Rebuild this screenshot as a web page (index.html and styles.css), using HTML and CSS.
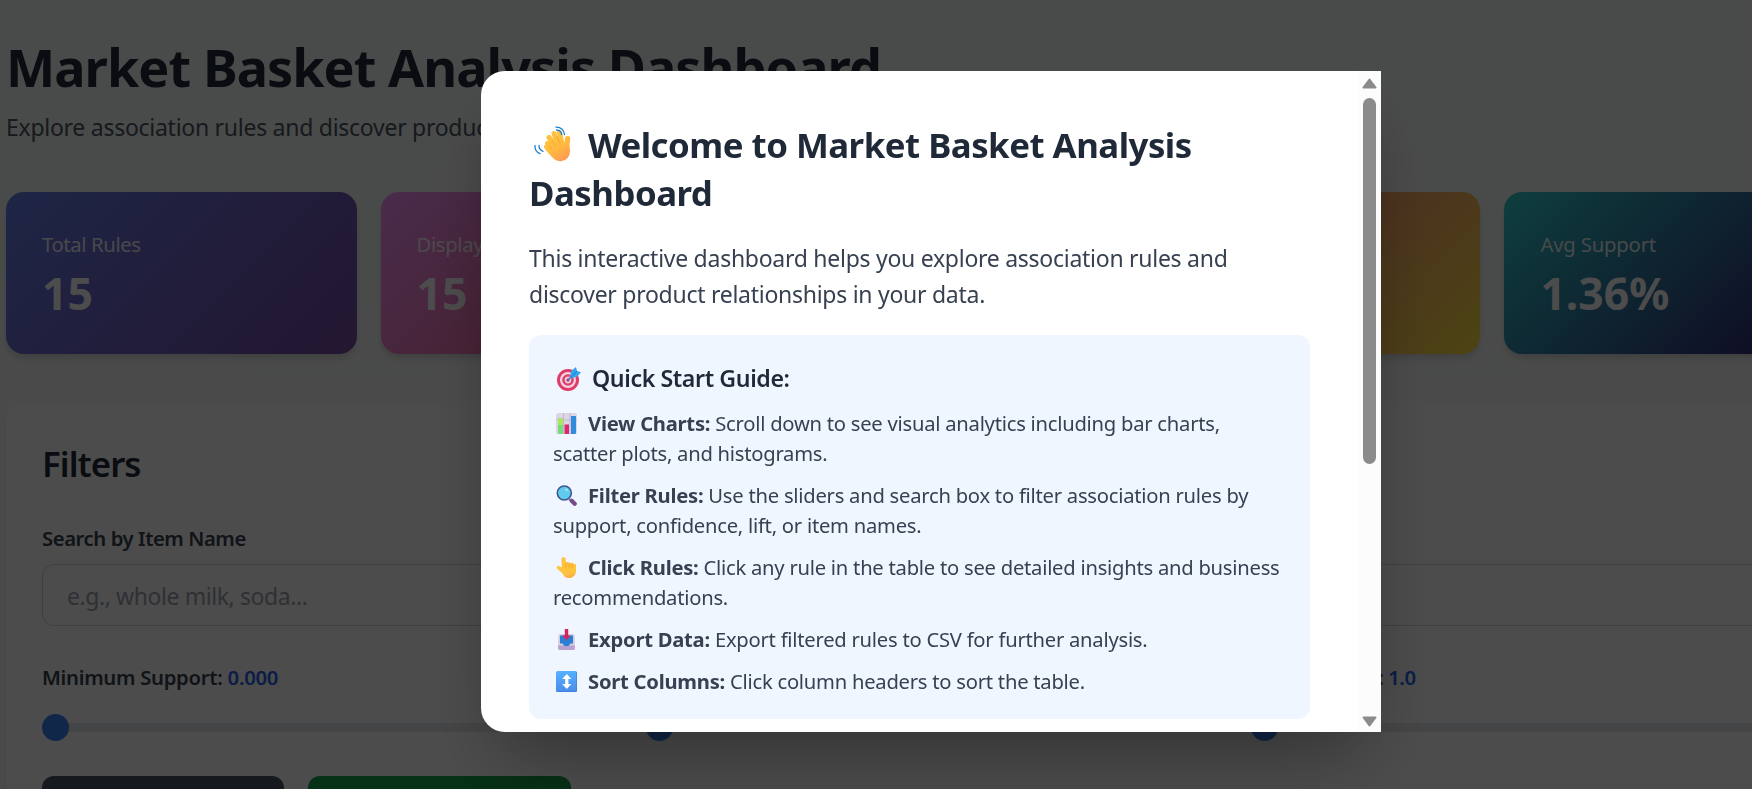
FILE: index.html
```html
<!DOCTYPE html>
<html lang="en">
<head>
<meta charset="utf-8">
<title>Market Basket Analysis Dashboard</title>
<link rel="stylesheet" href="styles.css">
</head>
<body>
<main class="page">
  <header class="page-header">
    <h1>Market Basket Analysis Dashboard</h1>
    <p class="subtitle">Explore association rules and discover product relationships</p>
  </header>
  <section class="stats">
    <div class="stat violet"><div class="stat-label">Total Rules</div><div class="stat-value">15</div></div>
    <div class="stat pink"><div class="stat-label">Displayed</div><div class="stat-value">15</div></div>
    <div class="stat sky"></div>
    <div class="stat amber"></div>
    <div class="stat teal"><div class="stat-label support">Avg Support</div><div class="stat-value">1.36%</div></div>
  </section>
  <section class="filters">
    <h2>Filters</h2>
    <div class="field-label search-label">Search by Item Name</div>
    <div class="search">e.g., whole milk, soda...</div>
    <div class="sliders">
      <div><div class="field-label">Minimum Support: <span class="num">0.000</span></div><div class="slider"><i class="thumb"></i></div></div>
      <div><div class="field-label">&nbsp;</div><div class="slider"><i class="thumb"></i></div></div>
      <div><div class="field-label lift">Minimum Lift: <span class="num">1.0</span></div><div class="slider"><i class="thumb"></i></div></div>
    </div>
    <div class="actions"><div class="btn gray"></div><div class="btn green"></div></div>
  </section>
</main>

<div class="overlay">
  <div class="modal">
    <div class="modal-body">
      <h2 class="modal-title"><svg class="wave" viewBox="0 0 38 38"><defs><linearGradient id="hand" x1="0" y1="0" x2=".7" y2="1"><stop offset="0" stop-color="#ffc83d"/><stop offset=".6" stop-color="#ffb741"/><stop offset="1" stop-color="#ff9a52"/></linearGradient></defs>
        <g fill="none" stroke="#ffc13d" stroke-width="5" stroke-linecap="round"><path d="M13.500 18.500l7 9"/><path d="M15 12.500l8 12"/><path d="M20 8.500l6 14"/><path d="M25.500 7.500l3 14"/></g>
        <path fill="url(#hand)" d="M11 20c1.500-1 3-.3 4 .8l4-9 8-1 3.200 8 .800-6c.300-2.500 5-2.600 5.200 0 .2 3-.7 5-.6 8 .1 2.500.9 5 .1 8-1.200 5-5.500 7.700-10.500 7.300-5-.4-8-4.500-14.700-12.800-1-1.300-.8-2.500.5-3.300z"/>
        <g fill="none" stroke="#f29a2e" stroke-width=".8" stroke-linecap="round"><path d="M15 20.500l2.500 3M18 15.500l3 4.500M22.800 11.500l2.500 6"/></g>
        <g fill="none" stroke="#1a7fd4" stroke-width="1.300" stroke-linecap="round"><path d="M22 2.200c5-.2 8.300 3 8.500 7.500M22.500 5c3 .2 4.800 2 5.200 4.500M1 20.500c-.2 3.500 1.500 6.800 5 8.200M5 20.500c0 2.800 1.500 4.800 4 5.800"/></g></svg>Welcome to Market Basket Analysis<br>Dashboard</h2>
      <p class="intro">This interactive dashboard helps you explore association rules and<br>discover product relationships in your data.</p>
      <div class="guide">
        <h3><svg class="target" viewBox="0 0 24 24"><circle cx="11" cy="13" r="11" fill="#e33b68"/><circle cx="11" cy="13" r="8" fill="#f2d5e3"/><circle cx="11" cy="13" r="5.800" fill="#e33b68"/><circle cx="11" cy="13" r="3.400" fill="#e9c9dc"/><circle cx="11" cy="13" r="1.500" fill="#9c3a6a"/><path d="M11 13l7-7" stroke="#3d7fc4" stroke-width="1.500"/><path fill="#35a5f0" d="M13 9.500l1-5.500L19 0l1 4 4 1.200-4 4.600-5.500 1.200z"/><path d="M14.500 10L20 4" stroke="#1c76cd"/></svg>Quick Start Guide:</h3>
        <p><svg class="icon" viewBox="0 0 21 21"><rect width="21" height="21" rx="2.500" fill="#dcd5e3"/><path d="M7.500 0v21M14 0v21M0 7h21" stroke="#bcb4c8" stroke-width=".8"/><path fill="#75dc78" d="M2 5.500h5V21H3a1 1 0 0 1-1-1z"/><path fill="#a9e85b" d="M2 5.500h5V12H2z"/><path fill="#dc286b" d="M8.500 11.500h4.500V21H8.500z"/><path fill="#308bdd" d="M15 3h5v17a1 1 0 0 1-1 1h-4z"/></svg><b>View Charts:</b> Scroll down to see visual analytics including bar charts,<br>scatter plots, and histograms.</p>
        <p><svg class="icon" viewBox="0 0 21 21"><path d="M13 14l2 2" stroke="#9a7d9f" stroke-width="2"/><path d="M15.700 15.700l3 3" stroke="#774b87" stroke-width="4.200" stroke-linecap="round"/><circle cx="8.300" cy="8" r="7" fill="#62cbec" stroke="#3d568f" stroke-width="1.600"/><circle cx="10.500" cy="4.800" r="1.300" fill="#a4e7fa"/></svg><b>Filter Rules:</b> Use the sliders and search box to filter association rules by<br>support, confidence, lift, or item names.</p>
        <p><svg class="icon" viewBox="0 0 21 21"><path fill="#ffc23d" d="M5.500 2c0-2.500 4-2.500 4.100 0l.5 5V6c.3-1.200 2.500-1.300 3 .2.800-1 2.500-.9 2.900.5.900-.8 2.500-.4 2.700 1 .6-1 1.400-.7 1.400.5v5c0 4.500-2.700 7.800-6.700 7.800-4.200 0-5.400-2-7.500-5.200L.9 11.500c-.8-1.700.9-3 2.600-2.200l2.300 1z"/><path d="M10.100 6v4M13.200 6.500v3.800M16.200 7v3.500" stroke="#f0a029" stroke-width=".8" stroke-linecap="round"/><path fill="#ff9f50" opacity=".65" d="M7.500 18.500c4.500 1 9-1 11.400-3.500-1 4-3.200 6-6 6-2.300 0-4-.8-5.400-2.500z"/></svg><b>Click Rules:</b> Click any rule in the table to see detailed insights and business<br>recommendations.</p>
        <p><svg class="icon" viewBox="0 0 21 21"><path fill="#d5cfe0" d="M4 5h13q1.500 0 1.700 2l.3 12q0 2-2 2H4q-2 0-2-2L2.300 7Q2.500 5 4 5z"/><path fill="#b9a2cf" d="M2 16.500h17V19q0 2-2 2H4q-2 0-2-2z"/><path fill="#2c7fd3" d="M4 6.500h13v8h-2.500l-2 2.500h-4l-2-2.500H4z"/><path fill="#d82458" d="M8.800 0h3.400v6.500h2.600L10.500 11 6.200 6.500h2.600z"/></svg><b>Export Data:</b> Export filtered rules to CSV for further analysis.</p>
        <p><svg class="icon" viewBox="0 0 21 21"><defs><linearGradient id="sort" x1="0" y1="0" x2="0" y2="1"><stop offset="0" stop-color="#55b1ff"/><stop offset="1" stop-color="#4a8ce8"/></linearGradient></defs><rect width="21" height="21" rx="1.800" fill="url(#sort)"/><path d="M.5 20.500h20V1" fill="none" stroke="#3f77d2" opacity=".6"/><path fill="#fff" d="M10.800 3l4.600 5h-3v5h3l-4.600 5-4.600-5h3V8h-3z"/></svg><b>Sort Columns:</b> Click column headers to sort the table.</p>
      </div>
    </div>
    <div class="scrollbar">
      <svg class="arrow" viewBox="0 0 15 11"><path d="M7.500 1.500L13.500 9.500H1.500z" fill="#8b8b8b" stroke="#8b8b8b" stroke-width="2" stroke-linejoin="round"/></svg>
      <div class="scroll-thumb"></div>
      <svg class="arrow down" viewBox="0 0 15 11"><path d="M7.500 9.500L1.500 1.500H13.500z" fill="#8b8b8b" stroke="#8b8b8b" stroke-width="2" stroke-linejoin="round"/></svg>
    </div>
  </div>
</div>
</body>
</html>
```
FILE: styles.css
```css
* { box-sizing: border-box; }
html, body { height: 100%; }
body {
  margin: 0;
  overflow: hidden;
  background: #f5fbf7;
  font-family: "Noto Sans", "Open Sans", sans-serif;
  color: #1f2937;
}
h1, h2, h3, p { margin: 0; }

.page { width: 100%; height: 100vh; overflow: hidden; padding: 37px 0 0 6px; background: linear-gradient(#f5fbf7, #f8faf8); }
.page-header { height: 155px; white-space: nowrap; }
h1 { font-size: 52.2px; line-height: 60px; font-weight: 700; color: #1f2937; letter-spacing: -0.95px; }
.subtitle { margin-top: 12px; font-size: 23px; line-height: 36px; color: #4b5563; letter-spacing: -0.27px; }

.stats { display: grid; width: 1849px; grid-template-columns: repeat(5, 1fr); gap: 24px; }
.stat { height: 162px; padding: 37px 36px 0; border-radius: 18px; color: #fff; box-shadow: 0 6px 9px -1px rgba(0, 0, 0, .1), 0 3px 6px -1px rgba(0, 0, 0, .06); }
.stat-label { font-size: 20.3px; line-height: 30px; opacity: .9; letter-spacing: -0.38px; }
.support { letter-spacing: -0.18px; }
.stat-value { margin-top: 7px; font-size: 44.5px; line-height: 54px; font-weight: 700; }
.violet { background: linear-gradient(135deg, #667eea, #764ba2); }
.pink { background: linear-gradient(135deg, #f093fb, #f5576c); }
.sky { background: linear-gradient(135deg, #4facfe, #00f2fe); }
.amber { background: linear-gradient(135deg, #fa709a, #fee140); }
.teal { background: linear-gradient(135deg, #30cfd0, #330867); }

.filters { width: 1849px; margin-top: 48px; height: 420px; padding: 38px 36px 0; border-radius: 18px; background: #fff; box-shadow: 0 6px 9px -1px rgba(0, 0, 0, .1); }
.filters h2 { font-size: 34.8px; line-height: 48px; font-weight: 600; margin-bottom: 35px; letter-spacing: -0.95px; }
.field-label { font-size: 20.3px; line-height: 30px; font-weight: 600; color: #374151; letter-spacing: -0.28px; }
.search-label { letter-spacing: -0.43px; }
.lift { letter-spacing: -0.45px; }
.num { color: #2563eb; }
.search { margin-top: 11px; height: 62px; padding: 0 24px; border: 1px solid #d1d5db; border-radius: 12px; font-size: 23px; line-height: 63px; color: #9ca3af; letter-spacing: -0.42px; }
.sliders { margin-top: 36px; display: grid; grid-template-columns: repeat(3, 1fr); gap: 36px; }
.slider { display: flex; align-items: center; margin-top: 31px; height: 9px; border-radius: 5px; background: #e5e7eb; }
.thumb { width: 27px; height: 27px; border-radius: 50%; background: #3b82f6; }
.actions { display: flex; gap: 24px; margin-top: 44px; }
.btn { height: 60px; border-radius: 12px; }
.gray { width: 242px; background: #4b5563; }
.green { width: 263px; background: #16a34a; }

.overlay { position: fixed; inset: 0; background: rgba(0, 0, 0, .7); padding: 71px 0 0 481px; }
.modal { display: flex; width: 900px; height: 661px; overflow: hidden; border-radius: 24px 0 0 24px; background: #fff; box-shadow: 0 37px 75px -18px rgba(0, 0, 0, .36); }
.modal-body { flex: none; width: 877px; padding: 50px 48px 0; white-space: nowrap; }
.modal-title { font-size: 34.8px; line-height: 48px; font-weight: 700; margin-bottom: 23px; letter-spacing: -0.5px; }
.wave { width: 38px; height: 38px; margin: 0 16px 0 5px; vertical-align: -5px; }
.intro { font-size: 23px; line-height: 36px; color: #374151; margin-bottom: 23px; letter-spacing: -0.27px; }
.guide { height: 384px; padding: 25px 24px 0; border-radius: 12px; background: #eff6ff; color: #374151; font-size: 20.2px; line-height: 30px; letter-spacing: -0.24px; }
.guide h3 { font-size: 23.2px; line-height: 36px; font-weight: 600; color: #1f2937; letter-spacing: -0.4px; }
.guide p { margin-top: 12px; }
.target { width: 24px; height: 24px; margin: 0 11px 0 4px; vertical-align: -4px; }
.icon { width: 21px; height: 21px; margin: 0 11px 0 3px; vertical-align: -3px; }

.scrollbar { display: flex; flex-direction: column; align-items: center; width: 23px; padding: 7px 0 5px; background: #fcfcfc; }
.arrow { width: 15px; height: 11px; }
.scroll-thumb { width: 13px; height: 366px; margin-top: 9px; border-radius: 7px; background: #8b8b8b; }
.down { margin-top: auto; }
```
